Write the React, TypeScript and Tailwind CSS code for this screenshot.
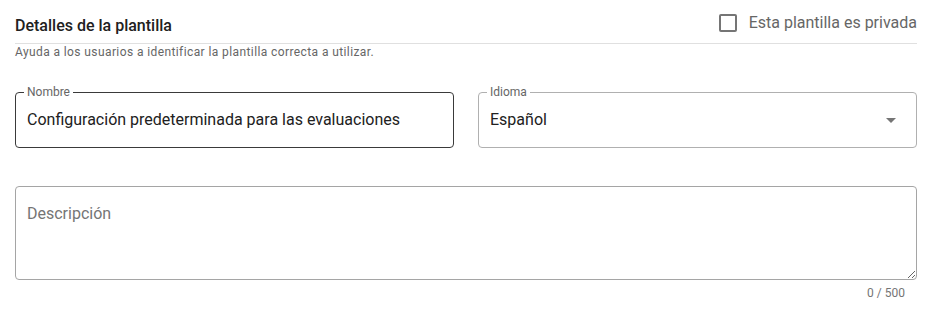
import React from "react";

export default function App() {
  return (
    <div className="w-[934px] h-[315px] bg-white pl-[15px] pr-[17px] font-['Roboto',sans-serif] text-[#212121]">
      <div className="flex items-start justify-between pt-[11px] pb-[5px] border-b border-[#e0e0e0]">
        <h2 className="mt-[3px] text-[16px] leading-6 font-medium text-[#212121]">Detalles de la plantilla</h2>
        <label className="flex items-center h-6 gap-[12px]">
          <span className="block w-[18px] h-[18px] border-2 border-[#757575] rounded-[2px] ml-[2px]" />
          <span className="text-[16px] leading-6 text-[#666666]">Esta plantilla es privada</span>
        </label>
      </div>
      <p className="text-[12px] leading-4 text-[#666666] tracking-[0.4px]">
        Ayuda a los usuarios a identificar la plantilla correcta a utilizar.
      </p>

      <div className="grid grid-cols-2 gap-6 mt-[32px]">
        <div className="relative h-[56px] border border-[#3a3a3a] rounded-[4px] flex items-center pl-[11px]">
          <span className="absolute -top-[9px] left-[8px] bg-white px-[3px] text-[12px] leading-4 text-[#666666]">Nombre</span>
          <span className="text-[16px] leading-6 text-[#212121]">Configuración predeterminada para las evaluaciones</span>
        </div>
        <div className="relative h-[56px] border border-[#b0b0b0] rounded-[4px] flex items-center pl-[11px]">
          <span className="absolute -top-[9px] left-[8px] bg-white px-[3px] text-[12px] leading-4 text-[#666666]">Idioma</span>
          <span className="text-[16px] leading-6 text-[#212121]">Español</span>
          <svg
            className="absolute right-[13px] top-1/2 -translate-y-1/2"
            width="24"
            height="24"
            viewBox="0 0 24 24"
          >
            <path d="M7 10l5 5 5-5z" fill="#757575" />
          </svg>
        </div>
      </div>

      <textarea
        readOnly
        placeholder="Descripción"
        className="block mt-[38px] w-full h-[94px] border border-[#a5a5a5] rounded-[4px] pl-[11px] pr-3 pt-[15px] text-[16px] leading-6 text-[#212121] placeholder:text-[#757575] outline-none font-['Roboto',sans-serif]"
      />
      <div className="mt-[5px] pr-[12px] text-right text-[12px] leading-4 text-[#757575]">0 / 500</div>
    </div>
  );
}
